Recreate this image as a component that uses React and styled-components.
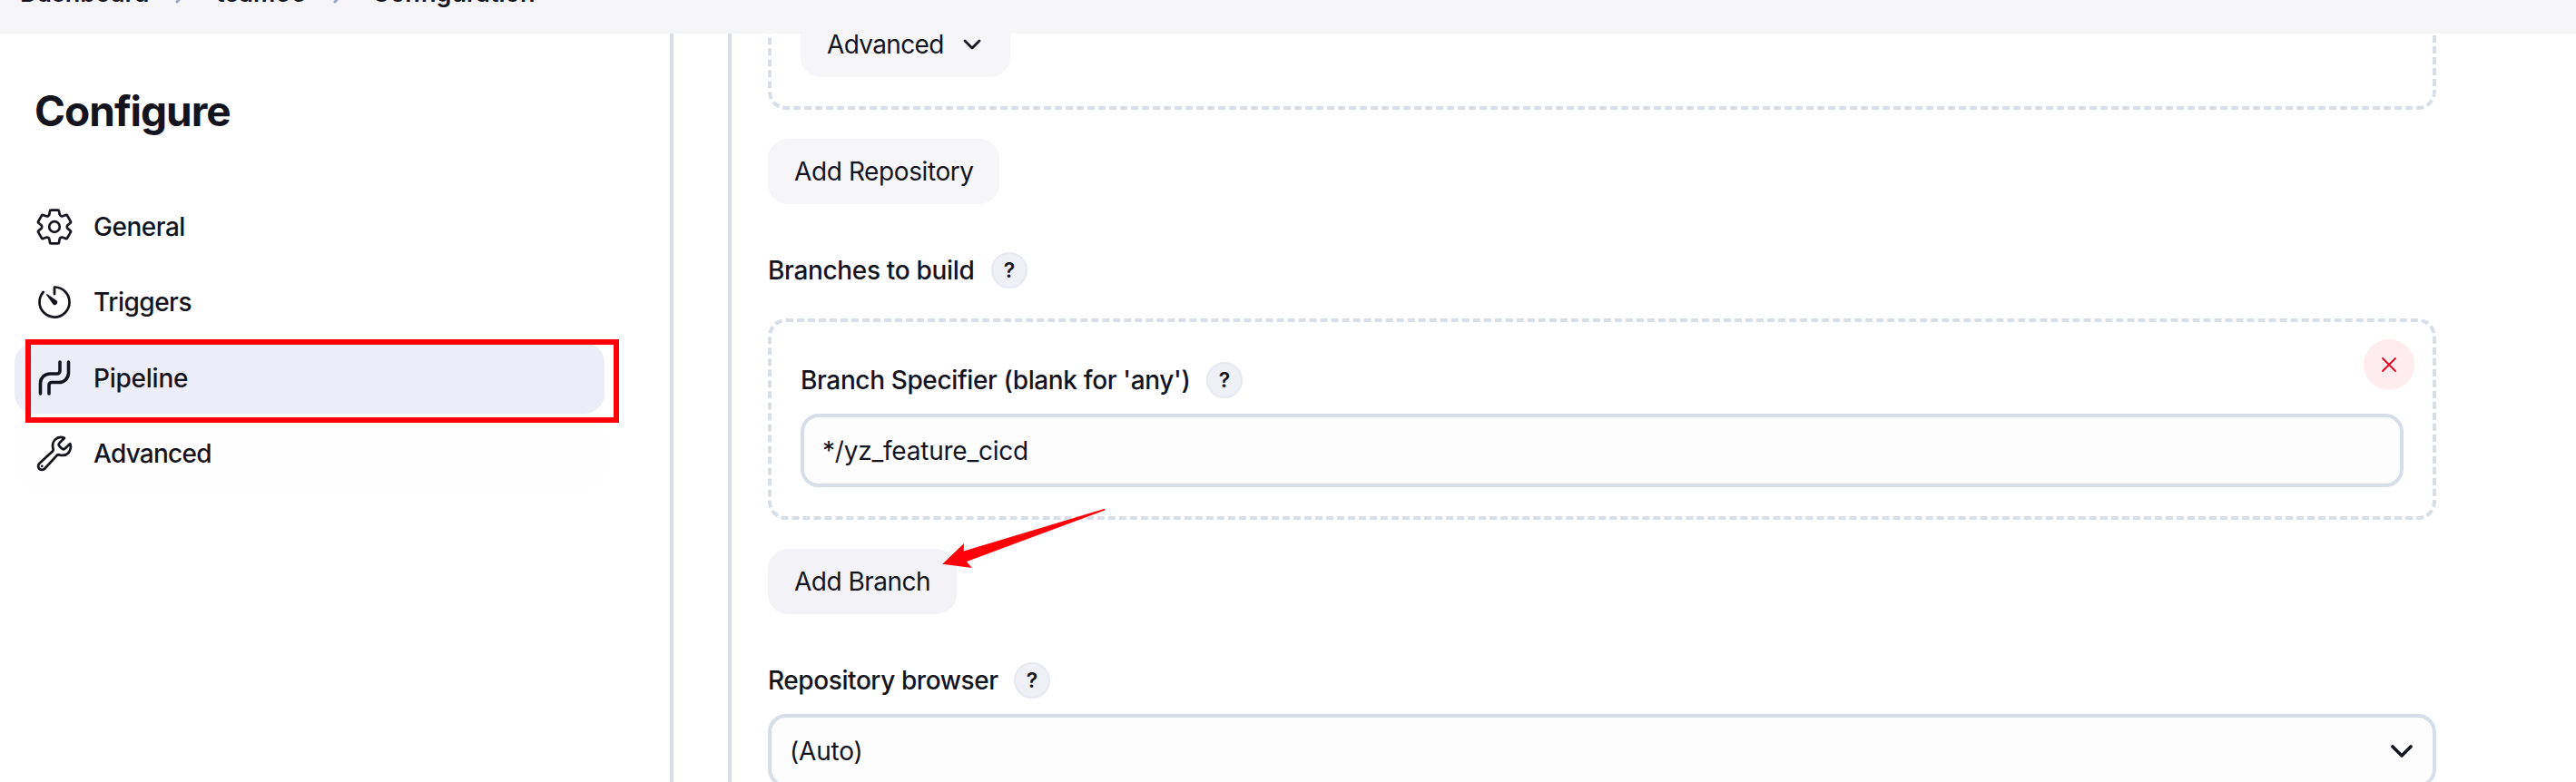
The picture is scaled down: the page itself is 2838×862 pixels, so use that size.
import React from "react";
import styled, { createGlobalStyle } from "styled-components";

const Global = createGlobalStyle`
  * { box-sizing: border-box; }
  html, body { margin: 0; padding: 0; overflow: hidden; background: #fff; }
  body { font-family: Inter, "Liberation Sans", sans-serif; font-size: 28px; color: #14141f; }
  button, input { font: inherit; color: inherit; }
`;

const Page = styled.div`
  position: relative;
  width: 2838px;
  height: 862px;
  overflow: hidden;
  display: flex;
  flex-direction: column;
`;

const Breadcrumbs = styled.header`
  flex: none;
  height: 37px;
  background: #f5f5f8;
  display: flex;
  align-items: flex-start;
  padding-left: 22px;
  font-size: 27px;
  font-weight: 600;
  line-height: 32px;
`;

const Crumb = styled.span`
  flex: none;
  width: ${(p) => p.$w}px;
  margin-top: -23px;
  white-space: nowrap;
`;

const CrumbArrow = styled.svg`
  flex: none;
  width: 12px;
  height: 20px;
  margin-top: -16px;
  margin-right: ${(p) => p.$gap}px;
  fill: none;
  stroke: #98a9c8;
  stroke-width: 3;
  stroke-linecap: round;
  stroke-linejoin: round;
`;

const Body = styled.div`
  flex: 1;
  min-height: 0;
  display: flex;
`;

const Sidebar = styled.aside`
  width: 742px;
  border-right: 4px solid #d8dee8;
  padding: 57px 0 0 16px;
`;

const Title = styled.h1`
  margin: 0 0 0 22px;
  font-size: 46px;
  line-height: 56px;
  font-weight: 700;
  letter-spacing: -1px;
`;

const Nav = styled.nav`
  margin-top: 61px;
  display: flex;
  flex-direction: column;
  gap: 5.4px;
`;

const NavItem = styled.a`
  width: 650px;
  height: 78px;
  border-radius: 22px;
  padding-left: 22px;
  display: flex;
  align-items: center;
  gap: 21px;
  font-weight: 500;
  letter-spacing: ${(p) => p.$ls || 0}px;
  background: ${(p) => p.$bg || "transparent"};
`;

const NavIcon = styled.svg`
  width: 44px;
  height: 44px;
  flex: none;
  fill: none;
  stroke: #14141f;
  stroke-width: ${(p) => p.$sw || 32};
  stroke-linecap: round;
  stroke-linejoin: round;
`;

const Main = styled.main`
  flex: 1;
  min-width: 0;
  margin-left: 60px;
  border-left: 4px solid #d8dee8;
  padding: 0 154px 0 40px;
  overflow: hidden;
`;

const DashedBox = styled.section`
  border: 4px dashed #d8dee8;
  border-radius: 20px;
  padding: 0 32px;
`;

const RepositoryBox = styled(DashedBox)`
  height: 184px;
  margin-top: -100px;
  padding-bottom: 32px;
  display: flex;
  align-items: flex-end;
`;

const BranchBox = styled(DashedBox)`
  position: relative;
  height: 222px;
  margin: 33px 0 32px;
  padding-top: 44px;
`;

const Button = styled.button`
  height: 72px;
  width: ${(p) => p.$w}px;
  border: 0;
  border-radius: 22px;
  padding: 0 0 0 29px;
  background: ${(p) => p.$bg || "#f6f6f9"};
  display: flex;
  align-items: center;
  white-space: nowrap;
  letter-spacing: ${(p) => p.$ls || 0}px;
`;

const AddRepository = styled(Button)`
  margin-top: 32px;
`;

const Chevron = styled.svg`
  width: ${(p) => p.$w}px;
  height: ${(p) => p.$h}px;
  margin-left: auto;
  margin-right: ${(p) => p.$right}px;
  margin-bottom: ${(p) => p.$lift || 0}px;
  fill: none;
  stroke: #14141f;
  stroke-width: ${(p) => p.$sw};
  stroke-linecap: round;
  stroke-linejoin: round;
`;

const FieldLabel = styled.div`
  height: 40px;
  margin-top: ${(p) => p.$top || 0}px;
  display: flex;
  align-items: center;
  font-weight: 500;
  white-space: nowrap;
`;

const LabelText = styled.span`
  width: ${(p) => p.$w}px;
  letter-spacing: ${(p) => p.$ls || 0}px;
`;

const Help = styled.span`
  width: 40px;
  height: 40px;
  border-radius: 50%;
  border: 2px solid #e8e8f1;
  background: #eff0f5;
  display: flex;
  align-items: center;
  justify-content: center;
  font-size: 23px;
  font-weight: 600;
`;

const TextInput = styled.input`
  display: block;
  width: 100%;
  height: 81px;
  margin-top: 17px;
  border: 4px solid #d8dee8;
  border-radius: 20px;
  background: #fdfdfe;
  padding: 0 20px;
  outline: 0;
  letter-spacing: -0.22px;
`;

const Select = styled.div`
  height: 81px;
  margin-top: 17px;
  border: 4px solid #d8dee8;
  border-radius: 20px;
  background: #fdfdfe;
  padding-left: 20px;
  display: flex;
  align-items: center;
  letter-spacing: -0.2px;
`;

const DeleteButton = styled.button`
  position: absolute;
  top: 19px;
  right: 20px;
  width: 56px;
  height: 56px;
  padding: 0;
  border: 0;
  border-radius: 50%;
  background: #ffecee;
  display: grid;
  place-items: center;
  svg { width: 18px; height: 18px; stroke: #e6001f; stroke-width: 1.8; stroke-linecap: round; }
`;

const Highlight = styled.div`
  position: absolute;
  left: 28px;
  top: 374px;
  width: 654px;
  height: 92px;
  border: 6px solid #ff0009;
`;

const Pointer = styled.svg`
  position: absolute;
  left: 1030px;
  top: 550px;
  width: 200px;
  height: 90px;
  fill: #ff0009;
`;

// Six identical teeth, each the previous one turned by 60 degrees.
const gearPath = (() => {
  const parts = [];
  for (let i = 0; i < 6; i += 1) {
    const at = (x, y, turn = i) => {
      const a = (turn * Math.PI) / 3;
      const px = 22 + x * Math.cos(a) - y * Math.sin(a);
      const py = 22 + x * Math.sin(a) + y * Math.cos(a);
      return `${px.toFixed(2)} ${py.toFixed(2)}`;
    };
    parts.push(
      `${i ? "L" : "M"}${at(-5.6, -13.8)}L${at(-5, -17.4)}Q${at(-4.8, -18.4)} ${at(-3.8, -18.4)}` +
        `L${at(3.8, -18.4)}Q${at(4.8, -18.4)} ${at(5, -17.4)}L${at(5.6, -13.8)}` +
        `Q${at(6.4, -11.2)} ${at(-5.6, -13.8, i + 1)}`
    );
  }
  return `${parts.join("")}Z`;
})();

const Gear = () => (
  <NavIcon viewBox="0 0 44 44" $sw={2.7}>
    <circle cx="22" cy="22" r="5.8" />
    <path d={gearPath} />
  </NavIcon>
);

const Timer = () => (
  <NavIcon viewBox="0 0 512 512">
    <path d="M112.910 128A191.850 191.850 0 0064 254c-1.180 106.350 85.650 193.800 192 194 106.200.2 192-85.830 192-192 0-104.540-83.550-189.610-187.500-192A4.360 4.360 0 00256 68.370V152" />
    <path fill="#14141f" stroke="none" d="M233.380 278.630l-79-113a8.130 8.130 0 0111.320-11.320l113 79a32.500 32.500 0 01-37.250 53.260 33.210 33.210 0 01-8.070-7.940z" />
  </NavIcon>
);

const Pipe = () => (
  <NavIcon viewBox="0 0 44 44" $sw={3.6}>
    <path d="M6.500 39V27.500A10.500 10.500 0 0 1 17 17h8a3 3 0 0 0 3-3V4" />
    <path d="M16 39V29.500a3 3 0 0 1 3-3h8A10.500 10.500 0 0 0 37.500 16V4" />
  </NavIcon>
);

const Wrench = () => (
  <NavIcon viewBox="0 0 512 512">
    <path d="M393.870 190a32.100 32.100 0 01-45.250 0l-26.570-26.570a32.090 32.090 0 010-45.260L382.190 58a1 1 0 00-.3-1.640c-38.820-16.640-89.150-8.160-121.110 23.570-30.580 30.350-32.320 76-21.120 115.840a31.930 31.930 0 01-9.060 32.080L64 380a48.170 48.170 0 1068 68l153.860-167a31.930 31.930 0 0131.600-9.130c39.540 10.590 84.540 8.600 114.720-21.190 32.490-32 39.500-88.560 23.750-120.930a1 1 0 00-1.600-.26z" />
    <circle cx="96" cy="416" r="16" fill="#14141f" stroke="none" />
  </NavIcon>
);

export default function App() {
  return (
    <Page>
      <Global />
      <Breadcrumbs>
        <Crumb $w={171}>Dashboard</Crumb>
        <CrumbArrow viewBox="0 0 12 20" $gap={33}><path d="M2 2l7 8-7 8" /></CrumbArrow>
        <Crumb $w={129}>team66</Crumb>
        <CrumbArrow viewBox="0 0 12 20" $gap={31}><path d="M2 2l7 8-7 8" /></CrumbArrow>
        <Crumb $w={300}>Configuration</Crumb>
      </Breadcrumbs>
      <Body>
        <Sidebar>
          <Title>Configure</Title>
          <Nav>
            <NavItem $ls={-0.5}><Gear />General</NavItem>
            <NavItem $ls={-0.5}><Timer />Triggers</NavItem>
            <NavItem $ls={-0.25} $bg="#ecedf6"><Pipe />Pipeline</NavItem>
            <NavItem $ls={-0.75} $bg="#fefefe"><Wrench />Advanced</NavItem>
          </Nav>
        </Sidebar>
        <Main>
          <RepositoryBox>
            <Button $w={231} $ls={-0.65}>
              Advanced
              <Chevron viewBox="0 0 20 12" $w={20} $h={12} $right={32} $lift={0} $sw={2.8}><path d="M2 2l8 8 8-8" /></Chevron>
            </Button>
          </RepositoryBox>
          <AddRepository $w={255} $ls={-0.4}>Add Repository</AddRepository>
          <FieldLabel $top={53}>
            <LabelText $w={246} $ls={-0.33}>Branches to build</LabelText>
            <Help>?</Help>
          </FieldLabel>
          <BranchBox>
            <FieldLabel>
              <LabelText $w={447} $ls={-0.37}>Branch Specifier (blank for 'any')</LabelText>
              <Help>?</Help>
            </FieldLabel>
            <TextInput defaultValue="*/yz_feature_cicd" />
            <DeleteButton aria-label="Delete">
              <svg viewBox="0 0 18 18"><path d="M2 2l14 14M16 2L2 16" /></svg>
            </DeleteButton>
          </BranchBox>
          <Button $w={208} $ls={-0.5} $bg="#f3f2f7">Add Branch</Button>
          <FieldLabel $top={53}>
            <LabelText $w={271} $ls={-0.42}>Repository browser</LabelText>
            <Help>?</Help>
          </FieldLabel>
          <Select>
            (Auto)
            <Chevron viewBox="0 0 24 14" $w={24} $h={14} $right={22} $lift={0} $sw={3.6}><path d="M2 2l10 10L22 2" /></Chevron>
          </Select>
        </Main>
      </Body>
      <Highlight />
      <Pointer viewBox="1030 550 200 90">
        <path d="M1038.300 621.700L1062 599l-.3 8.500L1217 560.800v1.700L1065 619l5.700 7z" />
      </Pointer>
    </Page>
  );
}
